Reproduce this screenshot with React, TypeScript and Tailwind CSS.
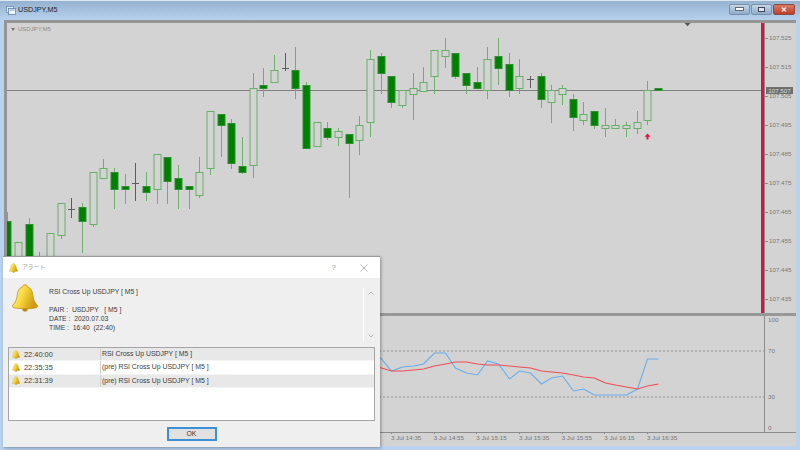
const SANS = 'font-["Liberation_Sans",sans-serif]';

// [hi, lo, top, bottom, kind] kind: u = hollow, d = filled, x = doji
type Candle = [number, number, number, number, 'u' | 'd' | 'x'];

const CANDLES: Candle[] = [
  [212, 262, 221, 262, 'd'], [242, 262, 242, 262, 'u'], [218, 262, 224, 262, 'd'], [252, 262, 262, 262, 'u'],
  [233, 262, 233, 262, 'u'], [203, 239, 203, 235, 'u'], [198, 218, 209, 209, 'x'], [203, 253, 207, 221, 'd'],
  [172, 227, 172, 224, 'u'], [159, 178, 168, 178, 'u'], [168, 209, 172, 189, 'd'], [174, 204, 186, 189, 'd'],
  [163, 201, 183, 183, 'x'], [172, 201, 186, 192, 'd'], [154, 204, 154, 189, 'u'], [157, 204, 157, 181, 'd'],
  [165, 209, 178, 189, 'd'], [186, 209, 186, 189, 'd'], [157, 198, 172, 195, 'u'], [111, 175, 111, 168, 'u'],
  [114, 157, 114, 125, 'd'], [119, 169, 123, 163, 'd'], [137, 174, 166, 172, 'd'], [73, 178, 88, 165, 'u'],
  [68, 97, 85, 88, 'd'], [55, 82, 70, 82, 'u'], [53, 71, 68, 68, 'x'], [47, 99, 70, 88, 'd'],
  [82, 148, 85, 148, 'd'], [122, 146, 122, 146, 'u'], [122, 140, 128, 137, 'd'], [128, 146, 131, 137, 'u'],
  [134, 198, 134, 143, 'd'], [116, 155, 125, 140, 'u'], [50, 137, 59, 122, 'u'], [53, 94, 56, 73, 'd'],
  [76, 108, 76, 102, 'd'], [90, 108, 90, 105, 'u'], [73, 120, 88, 94, 'u'], [67, 91, 82, 91, 'u'],
  [50, 94, 50, 76, 'u'], [38, 68, 50, 56, 'u'], [53, 79, 53, 76, 'd'], [73, 94, 73, 85, 'd'],
  [67, 88, 82, 88, 'd'], [47, 99, 59, 90, 'u'], [38, 85, 56, 68, 'd'], [53, 97, 64, 90, 'd'],
  [59, 94, 76, 88, 'u'], [76, 88, 79, 79, 'x'], [73, 108, 76, 99, 'd'], [85, 123, 90, 102, 'u'],
  [85, 105, 88, 94, 'u'], [94, 131, 99, 117, 'd'], [102, 125, 114, 120, 'u'], [111, 129, 111, 125, 'd'],
  [108, 137, 125, 128, 'u'], [119, 128, 125, 128, 'u'], [122, 137, 125, 128, 'u'], [111, 134, 122, 128, 'u'],
  [81, 125, 90, 120, 'u'], [88, 90, 88, 90, 'd'],
];

const candleX = (i: number) => Math.round(7.4 + 10.667 * i) + 0.5;

const BLUE: [number, number][] = [
  [34, 350], [35, 359], [36, 371], [37, 367], [38, 366], [39, 364], [40, 353], [41, 353], [42, 368], [43, 373],
  [44, 375], [45, 361], [46, 364], [47, 379], [48, 371], [49, 373], [50, 384], [51, 378], [52, 376], [53, 391],
  [54, 389], [55, 395], [56, 395], [57, 395], [58, 395], [59, 389], [60, 359], [61, 359],
];
const RED: [number, number][] = [
  [34, 365], [35, 368], [36, 371], [37, 371], [38, 370], [39, 369], [40, 366], [41, 364], [42, 362], [43, 362],
  [44, 364], [45, 365], [46, 365], [47, 366], [48, 367], [49, 368], [50, 371], [51, 372], [52, 373], [53, 375],
  [54, 377], [55, 378], [56, 383], [57, 385], [58, 387], [59, 389], [60, 386], [61, 384],
];

const PRICES = ['107.525', '107.515', '107.505', '107.495', '107.485', '107.475', '107.465', '107.455', '107.445', '107.435'];
const TIMES = ['3 Jul 14:35', '3 Jul 14:55', '3 Jul 15:15', '3 Jul 15:35', '3 Jul 15:55', '3 Jul 16:15', '3 Jul 16:35'];
const ALERTS = [
  { time: '22:40:00', text: 'RSI Cross Up USDJPY [ M5 ]', bg: 'bg-[#e8e8e8]' },
  { time: '22:35:35', text: '(pre) RSI Cross Up USDJPY [ M5 ]', bg: 'bg-white' },
  { time: '22:31:39', text: '(pre) RSI Cross Up USDJPY [ M5 ]', bg: 'bg-[#e8e8e8]' },
];

const toPoints = (line: [number, number][]) => line.map(([i, y]) => `${candleX(i)},${y}`).join(' ');

function Bell({ className }: { className: string }) {
  return (
    <svg viewBox="0 0 26 28" className={className}>
      <defs>
        <linearGradient id="bell-gold" x1="0" y1="0" x2="1" y2="0.4">
          <stop offset="0" stopColor="#fff6b0" />
          <stop offset="0.5" stopColor="#f8d93c" />
          <stop offset="1" stopColor="#cf9a14" />
        </linearGradient>
      </defs>
      <circle cx="13" cy="25" r="2.6" fill="#b9860f" />
      <path
        d="M13 0.8c-1.7 0-2.7 1-2.8 2.3C7 4 5.8 6.8 5.3 10.5 4.8 15 3.6 18.5 0.8 21.2c-0.8 0.9-0.3 2.2 1 2.5 3 0.7 7 1 11.2 1s8.200-0.300 11.200-1c1.300-0.300 1.800-1.600 1-2.500-2.800-2.700-4-6.200-4.500-10.700C20.200 6.800 19 4 15.800 3.100 15.700 1.800 14.700 0.800 13 0.800z"
        fill="url(#bell-gold)"
        stroke="#b8860b"
        strokeWidth="0.7"
      />
    </svg>
  );
}

function WindowIcon() {
  return (
    <svg viewBox="0 0 10 9" className="w-[10px] h-[9px] ml-[6px] mr-[2px]">
      <rect x="0.5" y="0.5" width="7" height="6" fill="#dfeaf6" stroke="#6f8fb5" strokeWidth="0.8" />
      <rect x="2.5" y="2.5" width="7" height="6" fill="#f3f7fb" stroke="#5f83ad" strokeWidth="0.8" />
      <rect x="3.5" y="3.5" width="5" height="1" fill="#7fa0c6" />
    </svg>
  );
}

function CandleChart() {
  return (
    <svg viewBox="7 23 754 290" className="w-[754px] h-[290px] block">
      <line x1="7" x2="761" y1="90.500" y2="90.500" stroke="#7f7f7f" strokeWidth="1" />
      {CANDLES.map(([hi, lo, top, bottom, kind], i) => {
        const x = candleX(i);
        if (kind === 'x') {
          return (
            <g key={i} stroke="#5c5c5c" strokeWidth="1">
              <line x1={x} x2={x} y1={hi} y2={lo} />
              <line x1={x - 3.500} x2={x + 3.500} y1={top + 0.5} y2={top + 0.5} />
            </g>
          );
        }
        return (
          <g key={i}>
            <line x1={x} x2={x} y1={hi} y2={lo} stroke="#6cb26c" strokeWidth="1" />
            <rect
              x={x - 3.500}
              y={top + 0.5}
              width="7"
              height={Math.max(bottom - top, 2)}
              fill={kind === 'd' ? '#008000' : '#d3d3d3'}
              stroke={kind === 'd' ? '#2f8f2f' : '#68b068'}
              strokeWidth="1"
            />
          </g>
        );
      })}
      {/* buy arrow */}
      <path d="M647.500 133.500l-3 3.200h2v2.800h2v-2.800h2z" fill="#e8104f" />
      {/* shift marker */}
      <path d="M684.500 23h6l-3 3.200z" fill="#555" />
    </svg>
  );
}

function RsiChart() {
  return (
    <svg viewBox="7 316 757 116" className="w-[757px] h-[116px] block">
      <line x1="7" x2="764" y1="351" y2="351" stroke="#808080" strokeWidth="0.8" strokeDasharray="2 2" />
      <line x1="7" x2="764" y1="397" y2="397" stroke="#808080" strokeWidth="0.8" strokeDasharray="2 2" />
      <polyline points={toPoints(BLUE)} fill="none" stroke="#68aeea" strokeWidth="1.100" />
      <polyline points={toPoints(RED)} fill="none" stroke="#ee4f55" strokeWidth="1.100" />
    </svg>
  );
}

function AlertDialog() {
  return (
    <div className="absolute left-[3px] top-[256px] w-[377px] h-[191px] flex flex-col bg-[#efefef] border-t border-t-[#9d9d9d] shadow-[1px_1px_3px_rgba(0,0,0,0.35)]">
      <div className="h-[21px] shrink-0 bg-white flex items-center">
        <Bell className="w-[9px] h-[10px] ml-[6px] mr-[4px]" />
        <span className='font-["Noto_Sans_CJK_JP",sans-serif] text-[5.800px] text-[#a0a0a0]'>アラート</span>
        <span className="ml-auto mr-[24px] text-[8px] text-[#9a9a9a]">?</span>
        <svg viewBox="0 0 8 8" className="w-2 h-2 mr-[12px]">
          <path d="M0.5 0.500l7 7M7.500 0.500l-7 7" stroke="#9a9a9a" strokeWidth="0.7" />
        </svg>
      </div>

      <div className="h-[69px] shrink-0 flex text-[6.800px] leading-[9px] text-[#3c3c3c]">
        <Bell className="w-[26px] h-[28px] ml-[9px] mt-[6px]" />
        <div className="ml-[11px] mt-[9px] flex-1">
          <p>RSI Cross Up USDJPY [ M5 ]</p>
          <p className="mt-[9px] whitespace-pre">PAIR :  USDJPY   [ M5 ]</p>
          <p className="whitespace-pre">DATE :  2020.07.03</p>
          <p className="whitespace-pre">TIME :  16:40  (22:40)</p>
        </div>
        <div className="w-[15px] mr-[2px] mt-[10px] mb-[6px] border-l border-l-white flex flex-col items-center justify-between py-[3px]">
          <svg viewBox="0 0 6 4" className="w-[6px] h-1"><path d="M0.500 3.500L3 1l2.500 2.500" fill="none" stroke="#b5b5b5" /></svg>
          <svg viewBox="0 0 6 4" className="w-[6px] h-1"><path d="M0.500 0.500L3 3l2.500-2.500" fill="none" stroke="#b5b5b5" /></svg>
        </div>
      </div>

      <div className="mx-[5px] h-[74px] shrink-0 border border-[#a5a5a5] bg-white flex flex-col text-[6.900px] text-[#3c3c3c]">
        {ALERTS.map((row) => (
          <div key={row.time} className={`h-[13.330px] shrink-0 flex items-center border-b border-b-[#f4f4f4] ${row.bg}`}>
            <Bell className="w-[8px] h-[9px] ml-[3px] shrink-0" />
            <span className="ml-[4px] w-[77px] shrink-0 border-r border-r-[#cfcfcf] h-full flex items-center text-[7.400px]">{row.time}</span>
            <span className="ml-px">{row.text}</span>
          </div>
        ))}
      </div>

      <div className="flex justify-center pt-[6px]">
        <button className="w-[50px] h-[14px] border-2 border-[#3d8fd6] bg-[#e1e1e1] text-[6.800px] text-[#333] flex items-center justify-center">
          OK
        </button>
      </div>
    </div>
  );
}

export default function App() {
  return (
    <div className={`relative w-[800px] h-[450px] overflow-hidden flex flex-col bg-[#b9d3ef] ${SANS}`}>
      {/* Title bar */}
      <div className="h-5 shrink-0 flex items-center border-t border-t-[#dfe6ee] bg-gradient-to-b from-[#96b2d1] to-[#b7d1ec]">
        <WindowIcon />
        <span className="text-[7.200px] text-[#222]">USDJPY,M5</span>
        <div className="ml-auto mr-[5px] flex gap-px mb-[3px]">
          <div className="w-[21px] h-[11px] rounded-[2px] border border-[#7790ad] bg-gradient-to-b from-[#c5d6e8] to-[#8fabc9] flex items-center justify-center">
            <div className="w-[7px] h-[2px] bg-white border border-[#667] box-content" />
          </div>
          <div className="w-[21px] h-[11px] rounded-[2px] border border-[#7790ad] bg-gradient-to-b from-[#c5d6e8] to-[#8fabc9] flex items-center justify-center">
            <div className="w-[7px] h-[5px] border border-[#445] bg-[#dce6f0]" />
          </div>
          <div className="w-[22px] h-[11px] rounded-[2px] border border-[#8d4a3c] bg-gradient-to-b from-[#d97a66] to-[#bb3f2a] flex items-center justify-center text-[7px] font-bold leading-none text-white">
            ✕
          </div>
        </div>
      </div>

      {/* Chart area */}
      <div className="relative ml-1 mr-1 w-[792px] h-[426px] shrink-0 flex flex-col bg-[#d3d3d3] border-l-[3px] border-t-[3px] border-[#959595]">
        {/* Main pane */}
        <div className="h-[290px] shrink-0 flex relative">
          <CandleChart />
          <div className="w-[3px] bg-[#dc143c]" />
          <div className="flex-1 border-l border-l-[#8c8c8c] flex flex-col pt-[10px] text-[6.200px] leading-[10px] text-[#787878]">
            {PRICES.map((p) => (
              <div key={p} className="h-[29px] shrink-0 flex items-start">
                <span className="w-[3px] h-px bg-[#8c8c8c] mt-[5px] mr-px" />
                <span>{p}</span>
              </div>
            ))}
          </div>
          <span className="absolute left-[759px] top-[64px] w-[27px] h-[7px] bg-[#6f6f6f] text-[6.200px] leading-[7px] text-[#dcdcdc] text-center">
            107.507
          </span>
          <span className="absolute left-[3px] top-[3px] flex items-center gap-[3px] text-[6px] leading-[6px] text-[#8a8a8a]">
            <span className="ml-px w-0 h-0 border-x-[2.500px] border-x-transparent border-t-[3px] border-t-[#777]" />
            USDJPY,M5
          </span>
        </div>

        <div className="h-[3px] shrink-0 bg-[#989898]" />

        {/* RSI pane */}
        <div className="h-[116px] shrink-0 flex border-b border-b-[#8c8c8c] box-content">
          <RsiChart />
          <div className="flex-1 border-l border-l-[#8c8c8c] relative pl-[3px] text-[6.200px] leading-[7px] text-[#787878]">
            <div className="h-[31px]">100</div>
            <div className="h-[46px]">70</div>
            <div className="h-[31px]">30</div>
            <div>0</div>
          </div>
        </div>

        {/* Time axis */}
        <div className="flex pl-[384px] text-[6.200px] leading-[7px] text-[#787878]">
          {TIMES.map((t) => (
            <div key={t} className="w-[42.670px] shrink-0 flex flex-col">
              <span className="w-px h-px bg-[#8c8c8c]" />
              <span className="whitespace-nowrap">{t}</span>
            </div>
          ))}
        </div>
      </div>

      <AlertDialog />
    </div>
  );
}
